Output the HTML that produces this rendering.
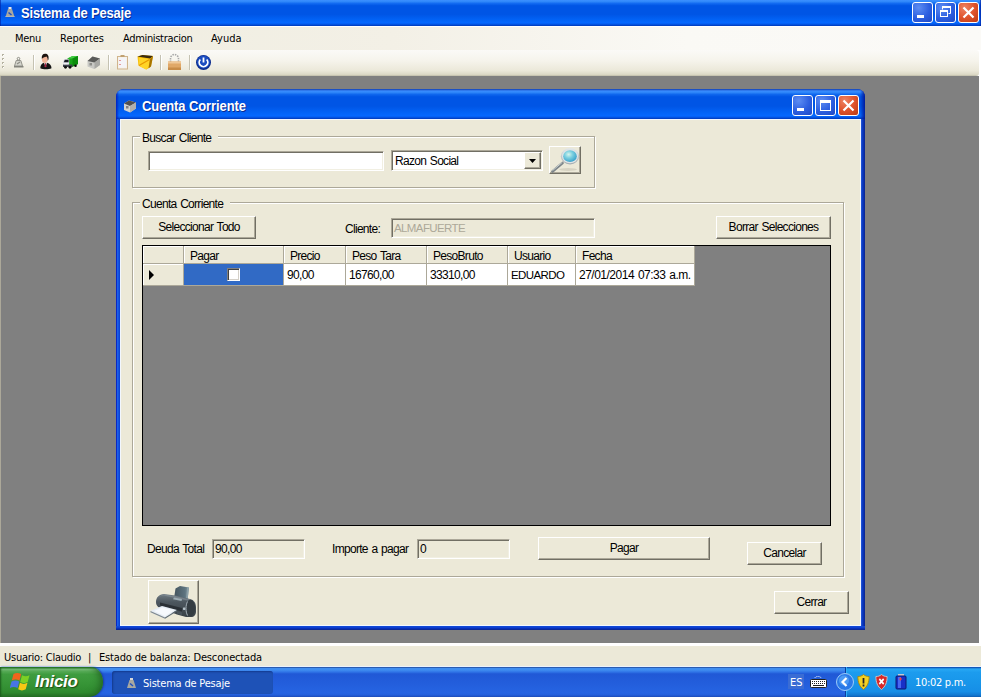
<!DOCTYPE html>
<html><head><meta charset="utf-8"><title>Sistema de Pesaje</title>
<style>
*{box-sizing:border-box;margin:0;padding:0}
html,body{width:981px;height:697px;overflow:hidden;background:#fff}
body{position:relative;font-family:"Liberation Sans",sans-serif;font-size:11px;color:#000}
.abs{position:absolute}
.t{position:absolute;white-space:nowrap;line-height:13px}
/* main title */
#mt{left:0;top:0;width:981px;height:26px;box-shadow:inset 1px 0 0 rgba(0,30,160,.6),inset -1px 0 0 rgba(0,30,160,.6);background:linear-gradient(180deg,#3c90ff 0%,#3088fa 6%,#1068f0 14%,#0055e5 22%,#0055e5 55%,#0262f5 75%,#0568ff 88%,#0458e8 93%,#0038b8 100%)}
#mt .ttl{left:21px;top:6px;transform:scaleY(1.1);transform-origin:0 12px;font-weight:bold;font-size:13px;line-height:16px;color:#fff;text-shadow:1px 1px 0 #0a2a90}
.cb{position:absolute;width:21px;height:21px;border:1px solid #fff;border-radius:3px;background:radial-gradient(circle at 30% 25%,#5d8df2 0%,#2d5fe0 55%,#1f48c4 100%)}
.cb.x{background:radial-gradient(circle at 30% 25%,#ee8464 0%,#e0542c 50%,#bc3a12 100%)}
.cb svg{position:absolute;left:0;top:0}
#menu{left:0;top:26px;width:981px;height:24px;border-top:1px solid #fff;background:linear-gradient(90deg,#efede0 0%,#f3f0e6 40%,#faf9f5 70%,#fbfaf7 100%)}
#menu .t{top:5px;font-family:"DejaVu Sans Condensed","DejaVu Sans",sans-serif;font-size:11px}
#tool{left:0;top:50px;width:979px;height:26px;background:linear-gradient(180deg,#fbfaf7 0%,#f6f4ec 40%,#ebe8d9 80%,#dcd9c6 94%,#bfbca8 100%);border-radius:0 3px 3px 0}
#mdi{left:0;top:76px;width:981px;height:567px;background:#808080;border-left:1px solid #aca899;border-right:2px solid #fff}
#status{left:0;top:643px;width:981px;height:24px;background:#ece9d8;border-top:3px solid #fff;border-bottom:1px solid #eaf2fd}
#status .t{top:5px;font-family:"DejaVu Sans Condensed","DejaVu Sans",sans-serif;font-size:11px}
#task{left:0;top:667px;width:981px;height:30px;background:linear-gradient(180deg,#2a5cb0 0%,#2a5cb0 3%,#3f8df0 5%,#3f8df0 10%,#2f73e6 17%,#2058d6 23%,#2664e2 86%,#2460dc 93%,#1d4cb8 100%)}
/* child window */
#cw{left:116px;top:89px;width:749px;height:541px;border-radius:8px 8px 0 0;background:linear-gradient(90deg,#0a28c4 0,#0a28c4 1px,#1c60ea 1px,#1c60ea 2px,#1454e0 2px,#1454e0 3px,#0c44d4 3px,#0c44d4 745px,#1c50d4 745px,#1c50d4 746px,#0c3ac2 746px,#0c3ac2 747px,#0830b2 747px,#0830b2 748px,#0a2898 748px)}
#cwbot{left:0;top:537px;width:749px;height:4px;background:linear-gradient(180deg,#1048d8 0,#1048d8 1px,#0c40d0 1px,#0c40d0 2px,#0830b8 2px,#0830b8 3px,#0a2898 3px)}
#cwt{left:0;top:0;width:749px;height:30px;border-radius:8px 8px 0 0;background:linear-gradient(90deg,rgba(0,25,190,.85) 0,rgba(0,25,190,0) 3px,rgba(0,25,190,0) 744px,rgba(0,20,150,.9) 749px),linear-gradient(180deg,#1a4fc4 0%,#1a4fc4 3%,#3a8cff 6%,#3088fa 11%,#0f67ee 18%,#0055e5 26%,#0055e5 57%,#0262f5 77%,#0568ff 90%,#0458e8 94%,#0038b8 100%)}
#cwt .ttl{left:26px;top:10px;transform:scaleY(1.08);transform-origin:0 12px;font-weight:bold;font-size:13px;line-height:16px;color:#fff;text-shadow:1px 1px 0 #0a2a90}
#cwb{left:4px;top:30px;width:741px;height:507px;background:#ece9d8;font-size:12px;letter-spacing:-0.7px;word-spacing:1px;box-shadow:inset 0 0 0 1px #f2f7ff}
.n{letter-spacing:-0.65px}
.d{letter-spacing:-0.5px}
.u{font-size:11.5px;letter-spacing:-0.6px}
.gb{position:absolute;border:1px solid #aca899;box-shadow:1px 1px 0 #fff, inset 1px 1px 0 #fff}
.gbl{position:absolute;background:#ece9d8;padding:0 7px 0 2px;white-space:nowrap;line-height:13px}
.btn{position:absolute;background:#ece9d8;border:1px solid;border-color:#fff #716f64 #716f64 #fff;box-shadow:inset -1px -1px 0 #aca899;text-align:center;white-space:nowrap}
.tb{position:absolute;background:#fff;border:1px solid;border-color:#aca899 #fff #fff #aca899;box-shadow:inset 1px 1px 0 #716f64,inset -1px -1px 0 #f1efe2}
.tb.ro{background:#ece9d8}

.cbtn{position:absolute;right:1px;top:1px;width:17px;height:17px;background:#ece9d8;border:1px solid;border-color:#fff #716f64 #716f64 #fff;box-shadow:inset -1px -1px 0 #aca899}
.cbtn svg{position:absolute;left:-1px;top:-1px}
#grid{background:#808080;border:1px solid #000}
.gh{position:absolute;top:0;height:18px;background:#ece9d8;border-right:1px solid #aca899;border-bottom:1px solid #aca899;box-shadow:inset 1px 1px 0 #fff;line-height:19px;padding-left:6px;white-space:nowrap;overflow:hidden}
.gh.rh{top:18px;height:22px}
.gc{position:absolute;top:18px;height:22px;background:#fff;border-right:1px solid #aca899;border-bottom:1px solid #aca899;line-height:20px;padding-left:3px;white-space:nowrap;overflow:hidden}
.gc.sel{background:#316ac5}

#start{left:0;top:0;width:103px;height:30px;border-radius:0 12px 14px 0/0 15px 15px 0;background:linear-gradient(180deg,#2c7c2c 0%,#2c7c2c 3%,#7cc07c 7%,#58ac58 14%,#3f9c3f 24%,#379537 55%,#2f8a2f 85%,#256f25 100%);box-shadow:inset -6px 0 8px -4px #1f5f1f,inset 2px 0 2px -1px #1c5c1c, 1px 0 2px #1a3c9c}
#tbtn{left:112px;top:4px;width:161px;height:23px;border-radius:3px;background:#1e52b7;box-shadow:inset 1px 1px 2px #143a8c}
#tray{left:845px;top:0;width:136px;height:30px;background:linear-gradient(180deg,#1258b8 0%,#1258b8 3%,#28a8f4 6%,#1c9cee 18%,#1896ea 50%,#168ee6 82%,#1278d0 94%,#0e5cb0 100%);border-left:1px solid #0c3c9c;box-shadow:inset 1px 0 0 #30b0f8}
.chk{position:absolute;left:43px;top:4px;width:13px;height:13px;background:#fff;border:1px solid;border-color:#808080 #fff #fff #808080;box-shadow:inset 1px 1px 0 #404040,inset -1px -1px 0 #d4d0c8}
#cwb .cmb,#cwb .gh,#cwb .gc{padding-top:1px}
#cwb .t,#cwb .gbl{margin-top:1px}
</style></head><body>
<div id="mt" class="abs">
  <svg class="abs" style="left:5px;top:6px" width="10" height="12"><rect x="3.500" y="1" width="3" height="2" fill="#e8e8e8"/><path d="M3 3h4l2.500 8h-9z" fill="#a8a8a0"/><path d="M3.500 6.500l3 2.500" stroke="#2050c0" stroke-width="1.600"/><rect x="0.500" y="10" width="9" height="1" fill="#b8b8b0"/></svg>
  <div class="t ttl" style="letter-spacing:-0.2px">Sistema de Pesaje</div>
  <div class="cb" style="left:912px;top:2px"><svg width="19" height="19"><rect x="4" y="12" width="7" height="3" fill="#fff"/></svg></div>
  <div class="cb" style="left:935px;top:2px"><svg width="19" height="19"><path d="M6.5 6.5V4.5h8v6h-2" fill="none" stroke="#fff" stroke-width="1"/><rect x="6" y="3" width="9" height="2" fill="#fff"/><rect x="4.5" y="8.500" width="7" height="5" fill="none" stroke="#fff"/><rect x="4" y="7" width="8" height="2" fill="#fff"/></svg></div>
  <div class="cb x" style="left:958px;top:2px"><svg width="19" height="19"><path d="M4.500 4.500l10 10M14.500 4.500l-10 10" stroke="#fff" stroke-width="2.200"/></svg></div>
</div>
<div id="menu" class="abs">
  <div class="t" style="left:15px;letter-spacing:-0.3px">Menu</div>
  <div class="t" style="left:60px">Reportes</div>
  <div class="t" style="left:123px;letter-spacing:-0.33px">Administracion</div>
  <div class="t" style="left:211px">Ayuda</div>
</div>
<div id="tool" class="abs">
<svg width="978" height="25" style="position:absolute;left:0;top:0">
<g fill="#b5b2a0"><rect x="2" y="4" width="2" height="2"/><rect x="2" y="8" width="2" height="2"/><rect x="2" y="12" width="2" height="2"/><rect x="2" y="16" width="2" height="2"/></g>
<g fill="#fff"><rect x="3" y="5" width="1" height="1"/><rect x="3" y="9" width="1" height="1"/><rect x="3" y="13" width="1" height="1"/><rect x="3" y="17" width="1" height="1"/></g>
<!-- scale icon (disabled) -->
<g><circle cx="18.500" cy="8.700" r="1.300" fill="none" stroke="#8c8c84" stroke-width="1"/><path d="M16.200 10.500h4.600l1.700 5.500h-8z" fill="#d4d4cc" stroke="#94948c" stroke-width="1"/><path d="M17 14l3-2" stroke="#8c8c84" stroke-width="1.200"/><rect x="14" y="16" width="9.500" height="1.500" fill="#84847c"/></g>
<!-- separators -->
<g><rect x="33" y="5" width="1" height="15" fill="#c5c2b2"/><rect x="34" y="5" width="1" height="15" fill="#fff"/>
<rect x="108" y="5" width="1" height="15" fill="#c5c2b2"/><rect x="109" y="5" width="1" height="15" fill="#fff"/>
<rect x="160" y="5" width="1" height="15" fill="#c5c2b2"/><rect x="161" y="5" width="1" height="15" fill="#fff"/>
<rect x="189" y="5" width="1" height="15" fill="#c5c2b2"/><rect x="190" y="5" width="1" height="15" fill="#fff"/></g>
<!-- person -->
<g><path d="M40.300 18.300c0-3 1.200-4.800 3.700-5.600l1.500 .8l1.500-.8c2.800.8 4.500 2.600 4.500 5.600c-3 1.400-8.200 1.400-11.200 0z" fill="#141414"/><path d="M44 12.700l1.500 .6l1.500-.6l-1.500 4.200z" fill="#f4f4f4"/><path d="M45 13.200h1l.5 3l-1 1.200l-1-1.200z" fill="#a82848"/><ellipse cx="44.800" cy="9.200" rx="2.900" ry="3.800" fill="#f0b498"/><path d="M41.800 8.800c-.4-3.200 1-5 3.300-5c2.600 0 4 2 3.400 5.400l-.7 1.600c0-2.200-.4-3.600-1.400-4.400c-1.500.7-3.200.7-4.600 2.400z" fill="#1c1410"/></g>
<!-- truck -->
<g><path d="M67.500 8.500l5-2.500h5.500v8l-5.500 2.700h-5z" fill="#18a418"/><path d="M67.500 8.500l5-2.500h5.500l-5.500 2.500z" fill="#44cc44"/><path d="M72.500 8.500v8.200l5.500-2.700V6z" fill="#0c8c0c"/><path d="M63 12l1.200-2.800h5v7.800h-6.200z" fill="#dcdce4"/><path d="M63.800 12.300h4.800V9.800H64.800z" fill="#181c24"/><rect x="63" y="14.500" width="9.500" height="2.500" fill="#3c4048"/><rect x="63.500" y="13.200" width="5" height="1.200" fill="#f4f4f8"/><circle cx="65.500" cy="17.300" r="1.400" fill="#0c0c0c"/><circle cx="70" cy="17.300" r="1.400" fill="#0c0c0c"/><circle cx="75.500" cy="15.800" r="1.300" fill="#0c0c0c"/></g>
<!-- house (disabled gray) -->
<g><path d="M87.500 11l5-4.500l7.500 2v6.500l-6 4l-6.500-2.500z" fill="#c8c8c4"/><path d="M87.500 11l5-4.500l7.500 2l-5.500 4z" fill="#5a5a58"/><path d="M94.500 12.500v6.500l5.500-4V8.500z" fill="#a8a8a4"/><rect x="89.500" y="13" width="2.500" height="2.500" fill="#8c8c88"/></g>
<!-- clipboard -->
<g><rect x="117.500" y="6.500" width="10" height="12.500" fill="#f6f2ea" stroke="#d0b48c"/><rect x="119" y="8" width="7" height="9.500" fill="#f4f4f8"/><rect x="120.500" y="5" width="4" height="2" fill="#c0a070"/><rect x="119.500" y="10" width="1" height="1" fill="#d04040"/><rect x="119.500" y="14" width="1" height="1" fill="#d04040"/></g>
<!-- yellow box -->
<g transform="translate(0,-1.500)"><path d="M137.500 8l5-1.500l10.500 1l-2 10l-4.500 3.500l-8-4z" fill="#f4b800"/><path d="M137.500 8l5-1.500l10.500 1l-3 2.500z" fill="#3a2a10"/><path d="M138.500 9l11.500 1.500l-1.500 8.500l-2.500 2l-7-3.500z" fill="#ffd428"/><path d="M139 17l10.500-6" stroke="#e89800" stroke-width="1.200"/><path d="M150 10.500l3-2.500l-2 10l-2.500 2z" fill="#a87400"/></g>
<!-- lock -->
<g><path d="M170.500 12v-3.500a4 4 0 0 1 8 0v3.500" fill="none" stroke="#a8a8a8" stroke-width="1.600" stroke-dasharray="1.500 1"/><rect x="168" y="11.500" width="13" height="8.500" fill="#e0a868"/><rect x="168" y="11.500" width="13" height="2" fill="#f0c898"/><rect x="168" y="17.500" width="13" height="2.500" fill="#c88c48"/></g>
<!-- power -->
<g><circle cx="203.500" cy="12.500" r="7.500" fill="#0c2c8c"/><circle cx="203.500" cy="12" r="6.500" fill="#1c4cc0"/><path d="M200.300 9.500a4.300 4.300 0 1 0 6.400 0" fill="none" stroke="#fff" stroke-width="1.800"/><path d="M203.500 7.500v5" stroke="#fff" stroke-width="1.800"/></g>
</svg>
</div>
<div id="mdi" class="abs"></div>

<div id="cw" class="abs">
  <div id="cwt" class="abs">
    <svg class="abs" style="left:7px;top:10px" width="14" height="14"><path d="M1 4.500l5-3l7 2v6l-6 4l-6-2.500z" fill="#d4d4d0"/><path d="M1 4.500l5-3l7 2l-6 3.500z" fill="#505050"/><path d="M7 7v6.500l6-4v-6z" fill="#b0b0ac"/><rect x="3" y="7" width="2.500" height="2.500" fill="#808080"/></svg>
    <div class="t ttl" style="letter-spacing:-0.1px">Cuenta Corriente</div>
    <div class="cb" style="left:676px;top:6px"><svg width="19" height="19"><rect x="4" y="12" width="7" height="3" fill="#fff"/></svg></div>
    <div class="cb" style="left:699px;top:6px"><svg width="19" height="19"><rect x="4.500" y="5.500" width="10" height="9" fill="none" stroke="#fff"/><rect x="4" y="4" width="11" height="3" fill="#fff"/></svg></div>
    <div class="cb x" style="left:722px;top:6px"><svg width="19" height="19"><path d="M4.500 4.500l10 10M14.500 4.500l-10 10" stroke="#fff" stroke-width="2.200"/></svg></div>
  </div>
  <div id="cwbot" class="abs"></div>
<!--CWB-->
<div id="cwb" class="abs">
<div class="gb" style="left:12px;top:17px;width:463px;height:52px"></div>
<div class="gbl" style="left:20px;top:12px">Buscar Cliente</div>
<div class="tb " style="left:28px;top:32px;width:236px;height:20px;line-height:18px;padding-left:2px;"></div>
<div class="tb cmb" style="left:271px;top:31px;width:152px;height:21px;line-height:19px;padding-left:3px">Razon Social<div class="cbtn"><svg width="17" height="17"><path d="M5 7h7l-3.500 4z" fill="#000"/></svg></div></div>
<div class="btn" id="srch" style="left:429px;top:27px;width:32px;height:28px"><svg width="30" height="26" style="position:absolute;left:0;top:0"><defs><radialGradient id="lg" cx="40%" cy="35%" r="65%"><stop offset="0" stop-color="#d4f4ec"/><stop offset=".45" stop-color="#7cd0e0"/><stop offset="1" stop-color="#3ca4cc"/></radialGradient><linearGradient id="rg" x1="0" y1="0" x2="0" y2="1"><stop offset="0" stop-color="#e4e8ea"/><stop offset="1" stop-color="#a4acb0"/></linearGradient></defs><ellipse cx="18" cy="22.500" rx="9" ry="1.500" fill="#d6d2c2"/><path d="M12.500 16l-10 8.500" stroke="#7c8488" stroke-width="2.600" stroke-linecap="round"/><path d="M12.300 15.300l-9.800 8.300" stroke="#c8d0d0" stroke-width="1"/><ellipse cx="20" cy="9.200" rx="9.200" ry="8.200" fill="url(#rg)"/><ellipse cx="20" cy="9.200" rx="8" ry="7" fill="#dfe4e6"/><ellipse cx="20" cy="9.200" rx="6.800" ry="5.900" fill="url(#lg)"/></svg>
</div>
<div class="gb" style="left:12px;top:83px;width:712px;height:375px"></div>
<div class="gbl" style="left:20px;top:78px">Cuenta Corriente</div>
<div class="btn"  style="left:22px;top:97px;width:114px;height:23px;line-height:20px;">Seleccionar Todo</div>
<div class="t" style="left:225px;top:103px">Cliente:</div>
<div class="tb ro u" style="left:271px;top:99px;width:204px;height:20px;line-height:18px;padding-left:2px;color:#aca899">ALMAFUERTE</div>
<div class="btn"  style="left:596px;top:97px;width:115px;height:23px;line-height:20px;">Borrar Selecciones</div>
<div id="grid" class="abs" style="left:22px;top:126px;width:689px;height:281px"><div class="gh" style="left:0px;width:41px"></div><div class="gh rh" style="left:0px;width:41px"><svg width="8" height="12" style="position:absolute;left:5px;top:5px"><path d="M1 1l5 5l-5 5z" fill="#000"/></svg></div><div class="gh" style="left:41px;width:100px">Pagar</div><div class="gc sel" style="left:41px;width:100px"><div class="chk"></div></div><div class="gh" style="left:141px;width:62px">Precio</div><div class="gc n" style="left:141px;width:62px">90,00</div><div class="gh" style="left:203px;width:81px">Peso Tara</div><div class="gc n" style="left:203px;width:81px">16760,00</div><div class="gh" style="left:284px;width:81px">PesoBruto</div><div class="gc n" style="left:284px;width:81px">33310,00</div><div class="gh" style="left:365px;width:68px">Usuario</div><div class="gc u" style="left:365px;width:68px">EDUARDO</div><div class="gh" style="left:433px;width:119px">Fecha</div><div class="gc d" style="left:433px;width:119px">27/01/2014 07:33 a.m.</div></div>
<div class="t" style="left:27px;top:423px">Deuda Total</div>
<div class="tb ro n" style="left:92px;top:420px;width:93px;height:20px;line-height:18px;padding-left:2px;">90,00</div>
<div class="t" style="left:212px;top:423px">Importe a pagar</div>
<div class="tb ro n" style="left:297px;top:420px;width:93px;height:20px;line-height:18px;padding-left:2px;">0</div>
<div class="btn"  style="left:418px;top:418px;width:172px;height:23px;line-height:20px;">Pagar</div>
<div class="btn"  style="left:627px;top:423px;width:75px;height:23px;line-height:20px;">Cancelar</div>
<div class="btn"  style="left:654px;top:472px;width:75px;height:23px;line-height:20px;">Cerrar</div>
<div class="btn" id="prn" style="left:28px;top:461px;width:51px;height:44px"><svg width="49" height="42" style="position:absolute;left:0;top:0"><defs><linearGradient id="pb" x1="0" y1="0" x2="0" y2="1"><stop offset="0" stop-color="#707c84"/><stop offset=".35" stop-color="#4c565e"/><stop offset="1" stop-color="#3a4248"/></linearGradient><linearGradient id="pf" x1="0" y1="0" x2="1" y2="0"><stop offset="0" stop-color="#44545e"/><stop offset=".7" stop-color="#5c727e"/><stop offset="1" stop-color="#7c929c"/></linearGradient></defs>
<path d="M26.500 7.500l4.500-2.500l9 1.500l-1.500 12.500l-13.500-1.500z" fill="url(#pf)"/>
<path d="M38 7l2 -.5l-1.500 12.500l-1.500-.2z" fill="#8ca0a8"/>
<path d="M7 21c0-4.500 3-7.500 8-8l11 1.500l15 3.500c4 1 6 4 6 8.500v4c0 3.500-2 5.500-5 5.500h-5l-9-2.500l-14-5.500c-4-1-7-3-7-7z" fill="url(#pb)"/>
<path d="M8 19.500c1-3.500 3.500-5.500 7-6l11 1.500l15 3.500c2.500.7 4 2 5 4c-2-1.500-4-2.300-6.500-2.800l-24-5c-3.500-.5-6 1.300-7.500 4.800z" fill="#8a969e" opacity=".55"/>
<path d="M25 16.500l8 1.500l-.5 2l-8.500-1.800z" fill="#9cacb4"/>
<ellipse cx="41.500" cy="27" rx="4.800" ry="8.300" fill="#343c42"/>
<path d="M38.500 20.500c-2 4-2 10 0 14" stroke="#a4b0b8" stroke-width="1" fill="none"/>
<path d="M11 21.500l22 5.500v3.500l-22-6z" fill="#2a3036"/>
<path d="M13 25l15 4l-12 7.500l-14.500-6.500z" fill="#e6edf5"/>
<path d="M1.500 30l14.500 6.500v1.300l-14.500-6.500z" fill="#7c8894"/><path d="M16 36.500l12-7.500v1.300l-12 7.500z" fill="#5c6874"/>
<path d="M13.500 26.500l11.500 3l-9 5.500l-11-5z" fill="#f6f9fd"/>
<path d="M28 30l5 1.200v3l-5-1.500z" fill="#4a545c"/>
<rect x="34" y="26.500" width="2.400" height="2.400" rx=".6" fill="#b4c0c8"/>
</svg>
</div>
</div>
<!--/CWB-->
</div>

<div id="status" class="abs">
  <div class="t" style="left:4px;letter-spacing:-0.25px">Usuario: Claudio</div>
  <div class="t" style="left:88px">|</div>
  <div class="t" style="left:99px;letter-spacing:-0.16px">Estado de balanza: Desconectada</div>
</div>
<div id="task" class="abs">
<div id="start" class="abs"><svg class="abs" style="left:10px;top:5px" width="22" height="20"><path d="M3.500 2c2.500-1.500 5.200-1.500 7.700 0l-1.700 6.500c-2.500-1.500-5.200-1.500-7.700 0z" fill="#f0641c"/><path d="M12 3.200c2.500 1.500 5 1.500 7.500 0l-1.800 6.800c-2.500 1.500-5 1.500-7.500 0z" fill="#7cd024"/><path d="M1.500 9.500c2.500-1.500 5.200-1.500 7.700 0l-1.700 6.500c-2.500-1.500-5.200-1.500-7.700 0z" fill="#4874e4"/><path d="M10 10.800c2.500 1.500 5 1.500 7.500 0l-1.800 6.500c-2.500 1.500-5 1.500-7.500 0z" fill="#f8c814"/></svg><div class="t" style="left:35px;top:5px;font:italic bold 17px/20px 'Liberation Sans',sans-serif;color:#fff;text-shadow:1px 1px 1px #1c4c14;letter-spacing:-0.3px">Inicio</div></div>
<div id="tbtn" class="abs"><svg class="abs" style="left:15px;top:7px" width="9" height="11"><rect x="3" y="0" width="3" height="2" fill="#d8d8d8"/><path d="M2.500 2h4l2.500 8h-9z" fill="#a8a8a0"/><path d="M3 5.500l3 2.500" stroke="#2050c0" stroke-width="1.500"/></svg><div class="t" style="left:31px;top:6px;color:#fff;font-family:'DejaVu Sans Condensed','DejaVu Sans',sans-serif;letter-spacing:-0.2px">Sistema de Pesaje</div></div>
<div id="tray" class="abs"></div>
<div class="abs" style="left:788px;top:7px;width:16px;height:15px;background:#3a6cd4"></div>
<div class="t" style="left:790px;top:9px;color:#fff;font-family:'DejaVu Sans Condensed','DejaVu Sans',sans-serif">ES</div>
<svg class="abs" style="left:810px;top:8px" width="17" height="14"><path d="M5 3c0-2 6-2 6 0" fill="none" stroke="#fff" stroke-width="1" stroke-dasharray="1 1"/><rect x="0.500" y="4.500" width="16" height="8" rx="1" fill="#fff" stroke="#222"/><g fill="#222"><rect x="2" y="6" width="1" height="1"/><rect x="4" y="6" width="1" height="1"/><rect x="6" y="6" width="1" height="1"/><rect x="8" y="6" width="1" height="1"/><rect x="10" y="6" width="1" height="1"/><rect x="12" y="6" width="1" height="1"/><rect x="14" y="6" width="1" height="1"/><rect x="2" y="8" width="1" height="1"/><rect x="4" y="8" width="1" height="1"/><rect x="6" y="8" width="1" height="1"/><rect x="8" y="8" width="1" height="1"/><rect x="10" y="8" width="1" height="1"/><rect x="12" y="8" width="1" height="1"/><rect x="14" y="8" width="1" height="1"/><rect x="3" y="10" width="11" height="1"/></g></svg>
<svg class="abs" style="left:836px;top:6px" width="18" height="18"><circle cx="9" cy="9" r="8.500" fill="#2a7ae8" stroke="#9ccaf8" stroke-width="1"/><circle cx="8" cy="7.500" r="5" fill="#4c9af4"/><path d="M10.500 5l-4 4l4 4" fill="none" stroke="#fff" stroke-width="2.200"/></svg>
<svg class="abs" style="left:857px;top:7px" width="13" height="16" viewBox="0 0 15 16" preserveAspectRatio="none"><path d="M7.500 .5c2 1.500 4 2 6.500 2c0 6-2 10-6.500 13c-4.500-3-6.500-7-6.500-13c2.500 0 4.500-.5 6.500-2z" fill="#f4d020" stroke="#a88810" stroke-width="1"/><path d="M7.500 4v5.500" stroke="#222" stroke-width="2"/><rect x="6.500" y="10.500" width="2" height="2" fill="#222"/></svg>
<svg class="abs" style="left:875px;top:7px" width="13" height="16" viewBox="0 0 15 16" preserveAspectRatio="none"><path d="M7.500 .5c2 1.500 4 2 6.500 2c0 6-2 10-6.500 13c-4.500-3-6.500-7-6.500-13c2.500 0 4.500-.5 6.500-2z" fill="#d82828" stroke="#c8c8c8" stroke-width="1"/><path d="M5 5l5 5M10 5l-5 5" stroke="#fff" stroke-width="1.800"/></svg>
<svg class="abs" style="left:895px;top:7px" width="12" height="16"><rect x="3" y="0" width="6" height="2" fill="#c8c8d0"/><rect x="1" y="2" width="10" height="13" rx="1" fill="#1830c8" stroke="#0c1870"/><rect x="3" y="3" width="3" height="11" fill="#4868f0"/><path d="M4 5h3M5.500 3.500v3" stroke="#f04040" stroke-width="1"/></svg>
<div class="t" style="left:915px;top:9px;color:#fff;font-family:'DejaVu Sans Condensed','DejaVu Sans',sans-serif;letter-spacing:-0.3px">10:02 p.m.</div>
</div>
</body></html>
